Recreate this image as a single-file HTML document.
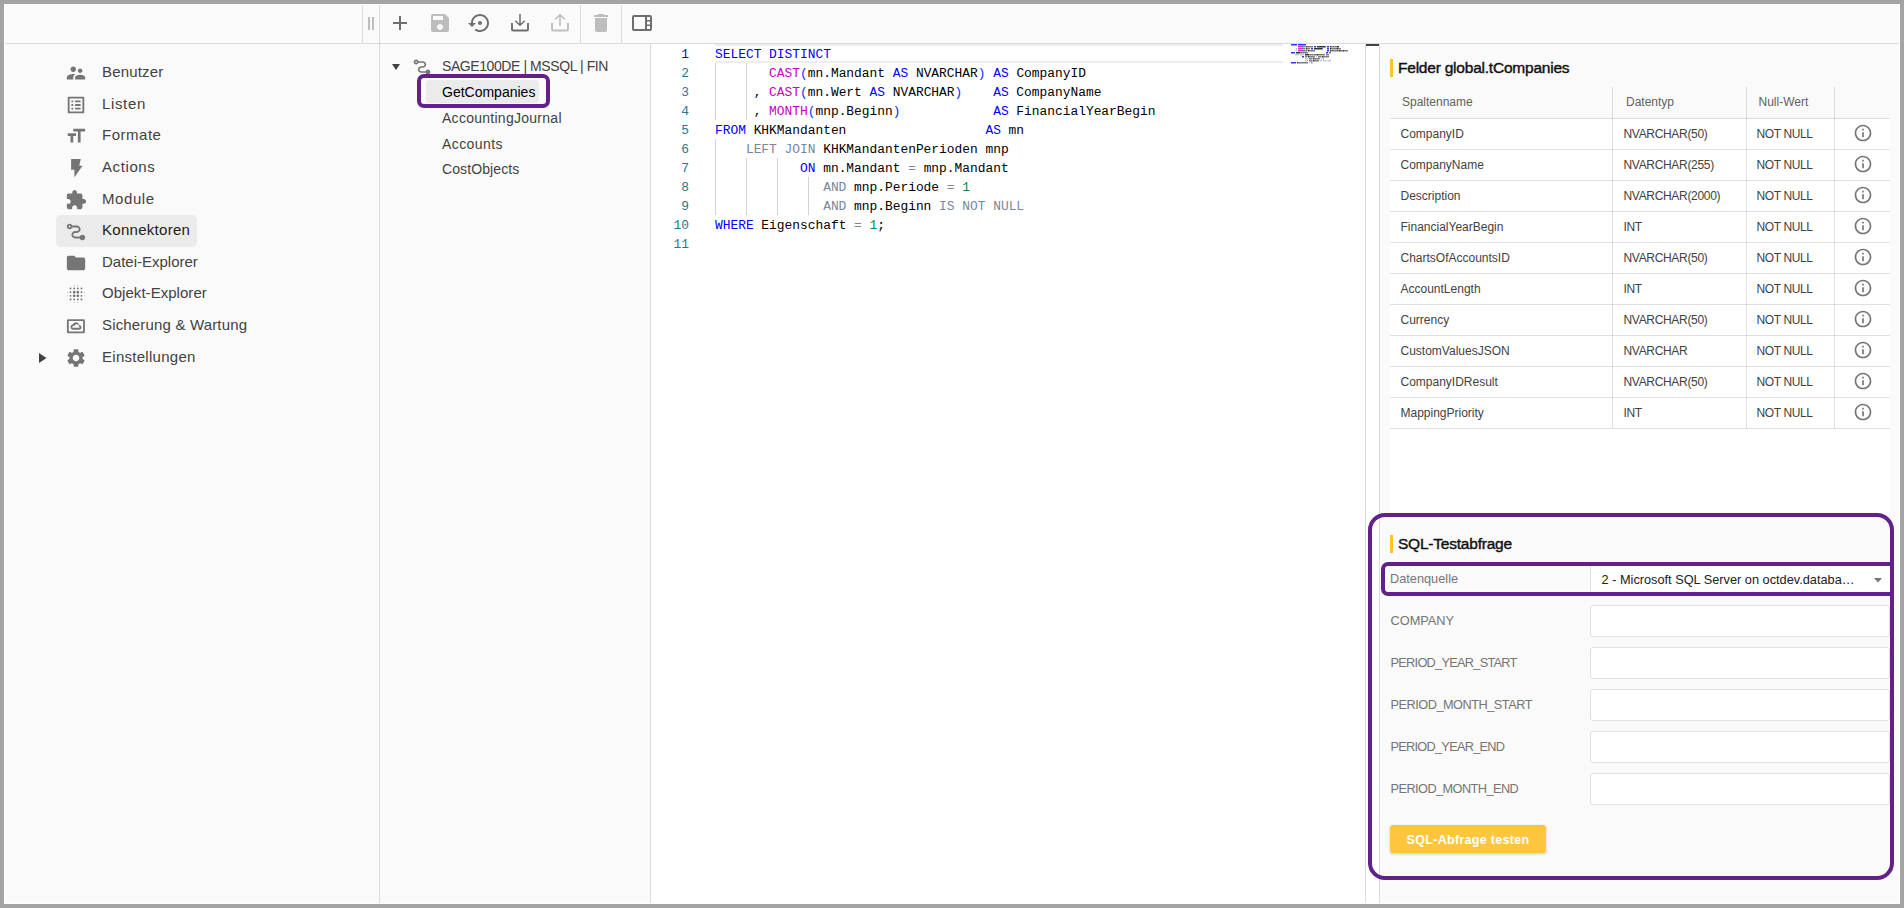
<!DOCTYPE html>
<html><head><meta charset="utf-8">
<style>
*{margin:0;padding:0;box-sizing:border-box}
html,body{width:1904px;height:908px;overflow:hidden;background:#a4a4a4;font-family:"Liberation Sans",sans-serif}
.abs{position:absolute}
#frame{position:absolute;left:4px;top:4px;width:1896px;height:900px;background:#fafafa;border:1px solid #fff;overflow:hidden}
.hl{position:absolute;background:rgba(0,0,0,.12)}
.nav{position:absolute;left:102px;font-size:15px;color:#424242;white-space:nowrap;line-height:20px}
.ico{position:absolute;fill:#757575}
.tree{position:absolute;left:442px;font-size:14px;color:#424242;white-space:nowrap;line-height:16px}
.code{position:absolute;left:715px;font-family:"Liberation Mono",monospace;font-size:12.88px;line-height:19px;white-space:pre;color:#000}
.ln{position:absolute;left:651px;width:38px;text-align:right;font-family:"Liberation Mono",monospace;font-size:12.88px;line-height:19px;color:#237893}
.k{color:#0000ff}.f{color:#c700c7}.o{color:#778899}.n{color:#098658}.b{color:#0431fa}
.guide{position:absolute;width:1px;background:#d3d3d3}
.txt{position:absolute;white-space:nowrap}
</style></head><body>
<div id="frame"></div>
<!-- toolbar lines -->
<div class="hl" style="left:5px;top:43px;width:1894px;height:1px"></div>
<div class="hl" style="left:362px;top:5px;width:1px;height:38px"></div>
<div class="hl" style="left:379px;top:5px;width:1px;height:898px"></div>
<div class="hl" style="left:580px;top:5px;width:1px;height:38px"></div>
<div class="hl" style="left:621px;top:5px;width:1px;height:38px"></div>
<div class="hl" style="left:650px;top:44px;width:1px;height:859px"></div>
<!-- editor bg -->
<div class="abs" style="left:651px;top:44px;width:714px;height:859px;background:#fff"></div>
<div class="hl" style="left:1365px;top:44px;width:1px;height:859px"></div>
<div class="abs" style="left:1366px;top:44px;width:13px;height:859px;background:#fff"></div>
<div class="abs" style="left:1366px;top:44px;width:13px;height:2px;background:#424242"></div>
<div class="hl" style="left:1379px;top:44px;width:1px;height:859px"></div>

<!-- toolbar icons -->
<div class="abs" style="left:368px;top:17px;width:2px;height:13px;background:#bdbdbd"></div>
<div class="abs" style="left:372px;top:17px;width:2px;height:13px;background:#bdbdbd"></div>
<svg class="abs" style="left:388px;top:11px" width="24" height="24" viewBox="0 0 24 24" fill="#6e6e6e"><path d="M19 13h-6v6h-2v-6H5v-2h6V5h2v6h6v2z"/></svg>
<svg class="abs" style="left:428px;top:11px" width="24" height="24" viewBox="0 0 24 24" fill="#bdbdbd"><path d="M17 3H5c-1.11 0-2 .9-2 2v14c0 1.1.89 2 2 2h14c1.1 0 2-.9 2-2V7l-4-4zm-5 16c-1.66 0-3-1.34-3-3s1.34-3 3-3 3 1.34 3 3-1.34 3-3 3zm3-10H5V5h10v4z"/></svg>
<svg class="abs" style="left:468px;top:11px" width="24" height="24" viewBox="0 0 24 24" fill="#6e6e6e"><path d="M14 12c0-1.1-.9-2-2-2s-2 .9-2 2 .9 2 2 2 2-.9 2-2zm-2-9c-4.97 0-9 4.03-9 9H0l4 4 4-4H5c0-3.87 3.13-7 7-7s7 3.13 7 7-3.13 7-7 7c-1.51 0-2.91-.49-4.06-1.3l-1.42 1.44C8.04 20.3 9.94 21 12 21c4.97 0 9-4.03 9-9s-4.03-9-9-9z"/></svg>
<svg class="abs" style="left:508px;top:11px" width="24" height="24" viewBox="0 0 24 24" fill="none" stroke="#6e6e6e" stroke-width="1.9"><path d="M4 12v6.2a1.3 1.3 0 0 0 1.3 1.3h13.4a1.3 1.3 0 0 0 1.3-1.3V12"/><path d="M12 3v11.2M7.3 9.7l4.7 4.6 4.7-4.6" stroke-width="1.5"/></svg>
<svg class="abs" style="left:548px;top:11px" width="24" height="24" viewBox="0 0 24 24" fill="none" stroke="#bdbdbd" stroke-width="1.9"><path d="M4 12v6.2a1.3 1.3 0 0 0 1.3 1.3h13.4a1.3 1.3 0 0 0 1.3-1.3V12"/><path d="M12 15V3.6M7.3 8.3L12 3.7l4.7 4.6" stroke-width="1.5"/></svg>
<svg class="abs" style="left:589px;top:11px" width="24" height="24" viewBox="0 0 24 24" fill="#bdbdbd"><path d="M6 19c0 1.1.9 2 2 2h8c1.1 0 2-.9 2-2V7H6v12zM19 4h-3.5l-1-1h-5l-1 1H5v2h14V4z"/></svg>
<svg class="abs" style="left:630px;top:11px" width="24" height="24" viewBox="0 0 24 24" fill="#6e6e6e" fill-rule="evenodd"><path d="M4 4h16a2 2 0 0 1 2 2v12a2 2 0 0 1-2 2H4a2 2 0 0 1-2-2V6a2 2 0 0 1 2-2zM4 6v12h11V6zM17 6v3h3V6zM17 10.5v3h3v-3zM17 15v3h3v-3z"/></svg>
<!-- sidebar -->
<div class="abs" style="left:56px;top:215px;width:141px;height:32px;background:#ebebeb;border-radius:5px"></div>
<svg class="ico" style="left:65px;top:62.00px" width="22" height="22" viewBox="0 0 24 24"><path d="M16.5 12c1.38 0 2.49-1.12 2.49-2.5S17.88 7 16.5 7C15.12 7 14 8.12 14 9.5s1.12 2.5 2.5 2.5zM9 11c1.66 0 2.99-1.34 2.99-3S10.66 5 9 5C7.34 5 6 6.34 6 8s1.34 3 3 3zm7.5 3c-1.83 0-5.5.92-5.5 2.75V19h11v-2.25c0-1.83-3.67-2.75-5.5-2.75zM9 13c-2.33 0-7 1.17-7 3.5V19h7v-2.25c0-.85.33-2.34 2.37-3.47C10.5 13.1 9.66 13 9 13z"/></svg>
<div class="nav" style="top:62.10px;color:#424242;letter-spacing:0.17px">Benutzer</div>
<svg class="ico" style="left:65px;top:93.60px" width="22" height="22" viewBox="0 0 24 24"><path d="M19 5v14H5V5h14m1.1-2H3.9c-.5 0-.9.4-.9.9v16.2c0 .4.4.9.9.9h16.2c.4 0 .9-.5.9-.9V3.9c0-.5-.5-.9-.9-.9zM11 7h6v2h-6V7zm0 4h6v2h-6v-2zm0 4h6v2h-6zM7 7h2v2H7zm0 4h2v2H7zm0 4h2v2H7z"/></svg>
<div class="nav" style="top:93.70px;color:#424242;letter-spacing:0.64px">Listen</div>
<svg class="ico" style="left:65px;top:125.20px" width="22" height="22" viewBox="0 0 24 24"><path d="M9 4v3h5v12h3V7h5V4H9zm-6 8h3v7h3v-7h3V9H3v3z"/></svg>
<div class="nav" style="top:125.30px;color:#424242;letter-spacing:0.52px">Formate</div>
<svg class="ico" style="left:65px;top:156.80px" width="22" height="22" viewBox="0 0 24 24"><path d="M6.65 2.1H17.2L15.55 9.6H19.2L10.25 22V14H6.65z"/></svg>
<div class="nav" style="top:156.90px;color:#424242;letter-spacing:0.6px">Actions</div>
<svg class="ico" style="left:65px;top:189.40px" width="22" height="22" viewBox="0 0 24 24"><path d="M20.5 11H19V7c0-1.1-.9-2-2-2h-4V3.5C13 2.12 11.88 1 10.5 1S8 2.12 8 3.5V5H4c-1.1 0-1.99.9-1.99 2v3.8H3.5c1.49 0 2.7 1.21 2.7 2.7s-1.21 2.7-2.7 2.7H2V20c0 1.1.9 2 2 2h3.8v-1.5c0-1.49 1.21-2.7 2.7-2.7 1.49 0 2.7 1.21 2.7 2.7V22H17c1.1 0 2-.9 2-2v-4h1.5c1.38 0 2.5-1.12 2.5-2.5S21.88 11 20.5 11z"/></svg>
<div class="nav" style="top:188.50px;color:#424242;letter-spacing:0.58px">Module</div>
<svg class="ico" style="left:65px;top:221.00px" width="22" height="22" viewBox="0 0 24 24"><g transform="translate(0 24) scale(0.025)"><path d="M760-120q-39 0-70-22.5T647-200H440q-66 0-113-47t-47-113q0-66 47-113t113-47h80q33 0 56.5-23.5T600-600q0-33-23.5-56.5T520-680H313q-13 35-43.5 57.5T200-600q-50 0-85-35t-35-85q0-50 35-85t85-35q39 0 69.5 22.5T313-760h207q66 0 113 47t47 113q0 66-47 113t-113 47h-80q-33 0-56.5 23.5T360-360q0 33 23.5 56.5T440-280h207q13-35 43.5-57.5T760-360q50 0 85 35t35 85q0 50-35 85t-85 35ZM200-680q17 0 28.5-11.5T240-720q0-17-11.5-28.5T200-760q-17 0-28.5 11.5T160-720q0 17 11.5 28.5T200-680Z"/></g></svg>
<div class="nav" style="top:220.10px;color:#212121;letter-spacing:0.29px">Konnektoren</div>
<svg class="ico" style="left:65px;top:251.60px" width="22" height="22" viewBox="0 0 24 24"><path d="M10 4H4c-1.1 0-1.99.9-1.99 2L2 18c0 1.1.9 2 2 2h16c1.1 0 2-.9 2-2V8c0-1.1-.9-2-2-2h-8l-2-2z"/></svg>
<div class="nav" style="top:251.70px;color:#424242;letter-spacing:0px">Datei-Explorer</div>
<svg class="ico" style="left:65px;top:283.20px" width="22" height="22" viewBox="0 0 24 24"><path d="M6 13c-.55 0-1 .45-1 1s.45 1 1 1 1-.45 1-1-.45-1-1-1zm0 4c-.55 0-1 .45-1 1s.45 1 1 1 1-.45 1-1-.45-1-1-1zm0-8c-.55 0-1 .45-1 1s.45 1 1 1 1-.45 1-1-.45-1-1-1zm-3 .5c-.28 0-.5.22-.5.5s.22.5.5.5.5-.22.5-.5-.22-.5-.5-.5zM6 5c-.55 0-1 .45-1 1s.45 1 1 1 1-.45 1-1-.45-1-1-1zm15 5.5c.28 0 .5-.22.5-.5s-.22-.5-.5-.5-.5.22-.5.5.22.5.5.5zM14 7c.55 0 1-.45 1-1s-.45-1-1-1-1 .45-1 1 .45 1 1 1zm0-3.5c.28 0 .5-.22.5-.5s-.22-.5-.5-.5-.5.22-.5.5.22.5.5.5zm-11 10c-.28 0-.5.22-.5.5s.22.5.5.5.5-.22.5-.5-.22-.5-.5-.5zm7 7c-.28 0-.5.22-.5.5s.22.5.5.5.5-.22.5-.5-.22-.5-.5-.5zm0-17.5c.28 0 .5-.22.5-.5s-.22-.5-.5-.5-.5.22-.5.5.22.5.5.5zM10 7c.55 0 1-.45 1-1s-.45-1-1-1-1 .45-1 1 .45 1 1 1zm0 5.5c-.83 0-1.5.67-1.5 1.5s.67 1.5 1.5 1.5 1.5-.67 1.5-1.5-.67-1.5-1.5-1.5zm8 .5c-.55 0-1 .45-1 1s.45 1 1 1 1-.45 1-1-.45-1-1-1zm0 4c-.55 0-1 .45-1 1s.45 1 1 1 1-.45 1-1-.45-1-1-1zm0-8c-.55 0-1 .45-1 1s.45 1 1 1 1-.45 1-1-.45-1-1-1zm0-4c-.55 0-1 .45-1 1s.45 1 1 1 1-.45 1-1-.45-1-1-1zm3 8.5c-.28 0-.5.22-.5.5s.22.5.5.5.5-.22.5-.5-.22-.5-.5-.5zM14 17c-.55 0-1 .45-1 1s.45 1 1 1 1-.45 1-1-.45-1-1-1zm0 3.5c-.28 0-.5.22-.5.5s.22.5.5.5.5-.22.5-.5-.22-.5-.5-.5zm-4-12c-.83 0-1.5.67-1.5 1.5s.67 1.5 1.5 1.5 1.5-.67 1.5-1.5-.67-1.5-1.5-1.5zm0 8.5c-.55 0-1 .45-1 1s.45 1 1 1 1-.45 1-1-.45-1-1-1zm4-4.5c-.83 0-1.5.67-1.5 1.5s.67 1.5 1.5 1.5 1.5-.67 1.5-1.5-.67-1.5-1.5-1.5zm0-4c-.83 0-1.5.67-1.5 1.5s.67 1.5 1.5 1.5 1.5-.67 1.5-1.5-.67-1.5-1.5-1.5z"/></svg>
<div class="nav" style="top:283.30px;color:#424242;letter-spacing:0.04px">Objekt-Explorer</div>
<svg class="ico" style="left:65px;top:315.30px" width="22" height="22" viewBox="0 0 24 24"><path d="M9 16h6.5c1.38 0 2.5-1.12 2.5-2.5S16.88 11 15.5 11h-.05c-.24-1.69-1.69-3-3.45-3-1.4 0-2.6.83-3.16 2.02h-.16C7.17 10.18 6 11.45 6 13c0 1.66 1.34 3 3 3zm.21-3.97l.23-.03h.6l.4-.63c.14-.22.84-1.37 2.56-1.37 1.51 0 2.45 1.38 2.49 2.62L15.5 13c.28 0 .5.22.5.5s-.22.5-.5.5H9c-.55 0-1-.45-1-1 0-.46.37-.94.79-.97z"/><path fill-rule="evenodd" d="M3.6 4.6h16.6a1.5 1.5 0 0 1 1.5 1.5v12.4a1.5 1.5 0 0 1-1.5 1.5H3.6a1.5 1.5 0 0 1-1.5-1.5V6.1a1.5 1.5 0 0 1 1.5-1.5zM4.1 6.6v11.4h15.6V6.6z"/></svg>
<div class="nav" style="top:314.90px;color:#424242;letter-spacing:0.17px">Sicherung &amp; Wartung</div>
<svg class="ico" style="left:65px;top:347.40px" width="22" height="22" viewBox="0 0 24 24"><path d="M19.14 12.94c.04-.3.06-.61.06-.94 0-.32-.02-.64-.07-.94l2.03-1.58c.18-.14.23-.41.12-.61l-1.92-3.32c-.12-.22-.37-.29-.59-.22l-2.39.96c-.5-.38-1.03-.7-1.62-.94l-.36-2.54c-.04-.24-.24-.41-.48-.41h-3.84c-.24 0-.43.17-.47.41l-.36 2.54c-.59.24-1.13.57-1.62.94l-2.39-.96c-.22-.08-.47 0-.59.22L2.74 8.87c-.12.21-.08.47.12.61l2.03 1.58c-.05.3-.09.63-.09.94s.02.64.07.94l-2.03 1.58c-.18.14-.23.41-.12.61l1.92 3.32c.12.22.37.29.59.22l2.39-.96c.5.38 1.03.7 1.62.94l.36 2.54c.05.24.24.41.48.41h3.84c.24 0 .44-.17.47-.41l.36-2.54c.59-.24 1.13-.56 1.62-.94l2.39.96c.22.08.47 0 .59-.22l1.92-3.32c.12-.22.07-.47-.12-.61l-2.01-1.58zM12 15.6c-1.98 0-3.6-1.62-3.6-3.6s1.62-3.6 3.6-3.6 3.6 1.62 3.6 3.6-1.62 3.6-3.6 3.6z"/></svg>
<div class="nav" style="top:346.50px;color:#424242;letter-spacing:0.28px">Einstellungen</div>
<svg class="abs" style="left:39px;top:352.5px" width="8" height="10" viewBox="0 0 8 10" fill="#424242"><path d="M0 0L7.5 5L0 10z"/></svg>
<!-- tree -->
<div class="abs" style="left:426px;top:80px;width:113px;height:23px;background:#ebebeb;border-radius:4px"></div>
<svg class="abs" style="left:392px;top:64px" width="8" height="6" viewBox="0 0 8 6" fill="#424242"><path d="M0 0h8L4 6z"/></svg>
<svg class="ico" style="left:412px;top:57px" width="20" height="20" viewBox="0 0 24 24"><g transform="translate(0 24) scale(0.025)"><path d="M760-120q-39 0-70-22.5T647-200H440q-66 0-113-47t-47-113q0-66 47-113t113-47h80q33 0 56.5-23.5T600-600q0-33-23.5-56.5T520-680H313q-13 35-43.5 57.5T200-600q-50 0-85-35t-35-85q0-50 35-85t85-35q39 0 69.5 22.5T313-760h207q66 0 113 47t47 113q0 66-47 113t-113 47h-80q-33 0-56.5 23.5T360-360q0 33 23.5 56.5T440-280h207q13-35 43.5-57.5T760-360q50 0 85 35t35 85q0 50-35 85t-85 35ZM200-680q17 0 28.5-11.5T240-720q0-17-11.5-28.5T200-760q-17 0-28.5 11.5T160-720q0 17 11.5 28.5T200-680Z"/></g></svg>
<div class="tree" style="top:58.00px;color:#424242;letter-spacing:-0.42px">SAGE100DE | MSSQL | FIN</div>
<div class="tree" style="top:84.40px;color:#000">GetCompanies</div>
<div class="tree" style="top:109.90px;color:#424242;letter-spacing:0.27px">AccountingJournal</div>
<div class="tree" style="top:135.70px;color:#424242;letter-spacing:0.41px">Accounts</div>
<div class="tree" style="top:160.60px;color:#424242;letter-spacing:0.1px">CostObjects</div>
<!-- editor -->
<div class="abs" style="left:715px;top:44px;width:568px;height:19px;border-top:2px solid #eeeeee;border-bottom:2px solid #eeeeee"></div>
<div class="guide" style="left:715.00px;top:63px;height:57px"></div>
<div class="guide" style="left:745.91px;top:63px;height:57px"></div>
<div class="guide" style="left:715.00px;top:139px;height:76px"></div>
<div class="guide" style="left:745.91px;top:158px;height:57px"></div>
<div class="guide" style="left:776.82px;top:158px;height:57px"></div>
<div class="guide" style="left:807.74px;top:177px;height:38px"></div>
<div class="ln" style="top:45px;color:#0b216f">1</div>
<div class="ln" style="top:64px;color:#237893">2</div>
<div class="ln" style="top:83px;color:#237893">3</div>
<div class="ln" style="top:102px;color:#237893">4</div>
<div class="ln" style="top:121px;color:#237893">5</div>
<div class="ln" style="top:140px;color:#237893">6</div>
<div class="ln" style="top:159px;color:#237893">7</div>
<div class="ln" style="top:178px;color:#237893">8</div>
<div class="ln" style="top:197px;color:#237893">9</div>
<div class="ln" style="top:216px;color:#237893">10</div>
<div class="ln" style="top:235px;color:#237893">11</div>
<div class="code" style="top:45px"><span class="k">SELECT</span> <span class="k">DISTINCT</span>
       <span class="f">CAST</span><span class="b">(</span>mn.Mandant <span class="k">AS</span> NVARCHAR<span class="b">)</span> <span class="k">AS</span> CompanyID
     , <span class="f">CAST</span><span class="b">(</span>mn.Wert <span class="k">AS</span> NVARCHAR<span class="b">)</span>    <span class="k">AS</span> CompanyName
     , <span class="f">MONTH</span><span class="b">(</span>mnp.Beginn<span class="b">)</span>            <span class="k">AS</span> FinancialYearBegin
<span class="k">FROM</span> KHKMandanten                  <span class="k">AS</span> mn
    <span class="o">LEFT</span> <span class="o">JOIN</span> KHKMandantenPerioden mnp
           <span class="k">ON</span> mn.Mandant <span class="o">=</span> mnp.Mandant
              <span class="o">AND</span> mnp.Periode <span class="o">=</span> <span class="n">1</span>
              <span class="o">AND</span> mnp.Beginn <span class="o">IS</span> <span class="o">NOT</span> <span class="o">NULL</span>
<span class="k">WHERE</span> Eigenschaft <span class="o">=</span> <span class="n">1</span>;
</div>
<!-- minimap -->
<svg class="abs" style="left:1291px;top:44px" width="60" height="22"><rect x="0" y="0" width="1" height="1.5" fill="#0000ff" fill-opacity="0.8"/><rect x="1" y="0" width="1" height="1.5" fill="#0000ff" fill-opacity="0.8"/><rect x="2" y="0" width="1" height="1.5" fill="#0000ff" fill-opacity="0.8"/><rect x="3" y="0" width="1" height="1.5" fill="#0000ff" fill-opacity="0.8"/><rect x="4" y="0" width="1" height="1.5" fill="#0000ff" fill-opacity="0.8"/><rect x="5" y="0" width="1" height="1.5" fill="#0000ff" fill-opacity="0.8"/><rect x="7" y="0" width="1" height="1.5" fill="#0000ff" fill-opacity="0.8"/><rect x="8" y="0" width="1" height="1.5" fill="#0000ff" fill-opacity="0.8"/><rect x="9" y="0" width="1" height="1.5" fill="#0000ff" fill-opacity="0.8"/><rect x="10" y="0" width="1" height="1.5" fill="#0000ff" fill-opacity="0.8"/><rect x="11" y="0" width="1" height="1.5" fill="#0000ff" fill-opacity="0.8"/><rect x="12" y="0" width="1" height="1.5" fill="#0000ff" fill-opacity="0.8"/><rect x="13" y="0" width="1" height="1.5" fill="#0000ff" fill-opacity="0.8"/><rect x="14" y="0" width="1" height="1.5" fill="#0000ff" fill-opacity="0.8"/><rect x="7" y="2" width="1" height="1.5" fill="#c700c7" fill-opacity="0.8"/><rect x="8" y="2" width="1" height="1.5" fill="#c700c7" fill-opacity="0.8"/><rect x="9" y="2" width="1" height="1.5" fill="#c700c7" fill-opacity="0.8"/><rect x="10" y="2" width="1" height="1.5" fill="#c700c7" fill-opacity="0.8"/><rect x="11" y="2" width="1" height="1.5" fill="#0431fa" fill-opacity="0.7"/><rect x="12" y="2" width="1" height="1.5" fill="#000000" fill-opacity="0.5"/><rect x="13" y="2" width="1" height="1.5" fill="#000000" fill-opacity="0.5"/><rect x="14" y="2" width="1" height="1.5" fill="#000000" fill-opacity="0.25"/><rect x="15" y="2" width="1" height="1.5" fill="#000000" fill-opacity="0.8"/><rect x="16" y="2" width="1" height="1.5" fill="#000000" fill-opacity="0.5"/><rect x="17" y="2" width="1" height="1.5" fill="#000000" fill-opacity="0.5"/><rect x="18" y="2" width="1" height="1.5" fill="#000000" fill-opacity="0.5"/><rect x="19" y="2" width="1" height="1.5" fill="#000000" fill-opacity="0.5"/><rect x="20" y="2" width="1" height="1.5" fill="#000000" fill-opacity="0.5"/><rect x="21" y="2" width="1" height="1.5" fill="#000000" fill-opacity="0.5"/><rect x="23" y="2" width="1" height="1.5" fill="#0000ff" fill-opacity="0.8"/><rect x="24" y="2" width="1" height="1.5" fill="#0000ff" fill-opacity="0.8"/><rect x="26" y="2" width="1" height="1.5" fill="#000000" fill-opacity="0.8"/><rect x="27" y="2" width="1" height="1.5" fill="#000000" fill-opacity="0.8"/><rect x="28" y="2" width="1" height="1.5" fill="#000000" fill-opacity="0.8"/><rect x="29" y="2" width="1" height="1.5" fill="#000000" fill-opacity="0.8"/><rect x="30" y="2" width="1" height="1.5" fill="#000000" fill-opacity="0.8"/><rect x="31" y="2" width="1" height="1.5" fill="#000000" fill-opacity="0.8"/><rect x="32" y="2" width="1" height="1.5" fill="#000000" fill-opacity="0.8"/><rect x="33" y="2" width="1" height="1.5" fill="#000000" fill-opacity="0.8"/><rect x="34" y="2" width="1" height="1.5" fill="#0431fa" fill-opacity="0.7"/><rect x="36" y="2" width="1" height="1.5" fill="#0000ff" fill-opacity="0.8"/><rect x="37" y="2" width="1" height="1.5" fill="#0000ff" fill-opacity="0.8"/><rect x="39" y="2" width="1" height="1.5" fill="#000000" fill-opacity="0.8"/><rect x="40" y="2" width="1" height="1.5" fill="#000000" fill-opacity="0.5"/><rect x="41" y="2" width="1" height="1.5" fill="#000000" fill-opacity="0.5"/><rect x="42" y="2" width="1" height="1.5" fill="#000000" fill-opacity="0.5"/><rect x="43" y="2" width="1" height="1.5" fill="#000000" fill-opacity="0.5"/><rect x="44" y="2" width="1" height="1.5" fill="#000000" fill-opacity="0.5"/><rect x="45" y="2" width="1" height="1.5" fill="#000000" fill-opacity="0.5"/><rect x="46" y="2" width="1" height="1.5" fill="#000000" fill-opacity="0.8"/><rect x="47" y="2" width="1" height="1.5" fill="#000000" fill-opacity="0.8"/><rect x="5" y="4" width="1" height="1.5" fill="#000000" fill-opacity="0.25"/><rect x="7" y="4" width="1" height="1.5" fill="#c700c7" fill-opacity="0.8"/><rect x="8" y="4" width="1" height="1.5" fill="#c700c7" fill-opacity="0.8"/><rect x="9" y="4" width="1" height="1.5" fill="#c700c7" fill-opacity="0.8"/><rect x="10" y="4" width="1" height="1.5" fill="#c700c7" fill-opacity="0.8"/><rect x="11" y="4" width="1" height="1.5" fill="#0431fa" fill-opacity="0.7"/><rect x="12" y="4" width="1" height="1.5" fill="#000000" fill-opacity="0.5"/><rect x="13" y="4" width="1" height="1.5" fill="#000000" fill-opacity="0.5"/><rect x="14" y="4" width="1" height="1.5" fill="#000000" fill-opacity="0.25"/><rect x="15" y="4" width="1" height="1.5" fill="#000000" fill-opacity="0.8"/><rect x="16" y="4" width="1" height="1.5" fill="#000000" fill-opacity="0.5"/><rect x="17" y="4" width="1" height="1.5" fill="#000000" fill-opacity="0.5"/><rect x="18" y="4" width="1" height="1.5" fill="#000000" fill-opacity="0.5"/><rect x="20" y="4" width="1" height="1.5" fill="#0000ff" fill-opacity="0.8"/><rect x="21" y="4" width="1" height="1.5" fill="#0000ff" fill-opacity="0.8"/><rect x="23" y="4" width="1" height="1.5" fill="#000000" fill-opacity="0.8"/><rect x="24" y="4" width="1" height="1.5" fill="#000000" fill-opacity="0.8"/><rect x="25" y="4" width="1" height="1.5" fill="#000000" fill-opacity="0.8"/><rect x="26" y="4" width="1" height="1.5" fill="#000000" fill-opacity="0.8"/><rect x="27" y="4" width="1" height="1.5" fill="#000000" fill-opacity="0.8"/><rect x="28" y="4" width="1" height="1.5" fill="#000000" fill-opacity="0.8"/><rect x="29" y="4" width="1" height="1.5" fill="#000000" fill-opacity="0.8"/><rect x="30" y="4" width="1" height="1.5" fill="#000000" fill-opacity="0.8"/><rect x="31" y="4" width="1" height="1.5" fill="#0431fa" fill-opacity="0.7"/><rect x="36" y="4" width="1" height="1.5" fill="#0000ff" fill-opacity="0.8"/><rect x="37" y="4" width="1" height="1.5" fill="#0000ff" fill-opacity="0.8"/><rect x="39" y="4" width="1" height="1.5" fill="#000000" fill-opacity="0.8"/><rect x="40" y="4" width="1" height="1.5" fill="#000000" fill-opacity="0.5"/><rect x="41" y="4" width="1" height="1.5" fill="#000000" fill-opacity="0.5"/><rect x="42" y="4" width="1" height="1.5" fill="#000000" fill-opacity="0.5"/><rect x="43" y="4" width="1" height="1.5" fill="#000000" fill-opacity="0.5"/><rect x="44" y="4" width="1" height="1.5" fill="#000000" fill-opacity="0.5"/><rect x="45" y="4" width="1" height="1.5" fill="#000000" fill-opacity="0.5"/><rect x="46" y="4" width="1" height="1.5" fill="#000000" fill-opacity="0.8"/><rect x="47" y="4" width="1" height="1.5" fill="#000000" fill-opacity="0.5"/><rect x="48" y="4" width="1" height="1.5" fill="#000000" fill-opacity="0.5"/><rect x="49" y="4" width="1" height="1.5" fill="#000000" fill-opacity="0.5"/><rect x="5" y="6" width="1" height="1.5" fill="#000000" fill-opacity="0.25"/><rect x="7" y="6" width="1" height="1.5" fill="#c700c7" fill-opacity="0.8"/><rect x="8" y="6" width="1" height="1.5" fill="#c700c7" fill-opacity="0.8"/><rect x="9" y="6" width="1" height="1.5" fill="#c700c7" fill-opacity="0.8"/><rect x="10" y="6" width="1" height="1.5" fill="#c700c7" fill-opacity="0.8"/><rect x="11" y="6" width="1" height="1.5" fill="#c700c7" fill-opacity="0.8"/><rect x="12" y="6" width="1" height="1.5" fill="#0431fa" fill-opacity="0.7"/><rect x="13" y="6" width="1" height="1.5" fill="#000000" fill-opacity="0.5"/><rect x="14" y="6" width="1" height="1.5" fill="#000000" fill-opacity="0.5"/><rect x="15" y="6" width="1" height="1.5" fill="#000000" fill-opacity="0.5"/><rect x="16" y="6" width="1" height="1.5" fill="#000000" fill-opacity="0.25"/><rect x="17" y="6" width="1" height="1.5" fill="#000000" fill-opacity="0.8"/><rect x="18" y="6" width="1" height="1.5" fill="#000000" fill-opacity="0.5"/><rect x="19" y="6" width="1" height="1.5" fill="#000000" fill-opacity="0.5"/><rect x="20" y="6" width="1" height="1.5" fill="#000000" fill-opacity="0.5"/><rect x="21" y="6" width="1" height="1.5" fill="#000000" fill-opacity="0.5"/><rect x="22" y="6" width="1" height="1.5" fill="#000000" fill-opacity="0.5"/><rect x="23" y="6" width="1" height="1.5" fill="#0431fa" fill-opacity="0.7"/><rect x="36" y="6" width="1" height="1.5" fill="#0000ff" fill-opacity="0.8"/><rect x="37" y="6" width="1" height="1.5" fill="#0000ff" fill-opacity="0.8"/><rect x="39" y="6" width="1" height="1.5" fill="#000000" fill-opacity="0.8"/><rect x="40" y="6" width="1" height="1.5" fill="#000000" fill-opacity="0.5"/><rect x="41" y="6" width="1" height="1.5" fill="#000000" fill-opacity="0.5"/><rect x="42" y="6" width="1" height="1.5" fill="#000000" fill-opacity="0.5"/><rect x="43" y="6" width="1" height="1.5" fill="#000000" fill-opacity="0.5"/><rect x="44" y="6" width="1" height="1.5" fill="#000000" fill-opacity="0.5"/><rect x="45" y="6" width="1" height="1.5" fill="#000000" fill-opacity="0.5"/><rect x="46" y="6" width="1" height="1.5" fill="#000000" fill-opacity="0.5"/><rect x="47" y="6" width="1" height="1.5" fill="#000000" fill-opacity="0.5"/><rect x="48" y="6" width="1" height="1.5" fill="#000000" fill-opacity="0.8"/><rect x="49" y="6" width="1" height="1.5" fill="#000000" fill-opacity="0.5"/><rect x="50" y="6" width="1" height="1.5" fill="#000000" fill-opacity="0.5"/><rect x="51" y="6" width="1" height="1.5" fill="#000000" fill-opacity="0.5"/><rect x="52" y="6" width="1" height="1.5" fill="#000000" fill-opacity="0.8"/><rect x="53" y="6" width="1" height="1.5" fill="#000000" fill-opacity="0.5"/><rect x="54" y="6" width="1" height="1.5" fill="#000000" fill-opacity="0.5"/><rect x="55" y="6" width="1" height="1.5" fill="#000000" fill-opacity="0.5"/><rect x="56" y="6" width="1" height="1.5" fill="#000000" fill-opacity="0.5"/><rect x="0" y="8" width="1" height="1.5" fill="#0000ff" fill-opacity="0.8"/><rect x="1" y="8" width="1" height="1.5" fill="#0000ff" fill-opacity="0.8"/><rect x="2" y="8" width="1" height="1.5" fill="#0000ff" fill-opacity="0.8"/><rect x="3" y="8" width="1" height="1.5" fill="#0000ff" fill-opacity="0.8"/><rect x="5" y="8" width="1" height="1.5" fill="#000000" fill-opacity="0.8"/><rect x="6" y="8" width="1" height="1.5" fill="#000000" fill-opacity="0.8"/><rect x="7" y="8" width="1" height="1.5" fill="#000000" fill-opacity="0.8"/><rect x="8" y="8" width="1" height="1.5" fill="#000000" fill-opacity="0.8"/><rect x="9" y="8" width="1" height="1.5" fill="#000000" fill-opacity="0.5"/><rect x="10" y="8" width="1" height="1.5" fill="#000000" fill-opacity="0.5"/><rect x="11" y="8" width="1" height="1.5" fill="#000000" fill-opacity="0.5"/><rect x="12" y="8" width="1" height="1.5" fill="#000000" fill-opacity="0.5"/><rect x="13" y="8" width="1" height="1.5" fill="#000000" fill-opacity="0.5"/><rect x="14" y="8" width="1" height="1.5" fill="#000000" fill-opacity="0.5"/><rect x="15" y="8" width="1" height="1.5" fill="#000000" fill-opacity="0.5"/><rect x="16" y="8" width="1" height="1.5" fill="#000000" fill-opacity="0.5"/><rect x="35" y="8" width="1" height="1.5" fill="#0000ff" fill-opacity="0.8"/><rect x="36" y="8" width="1" height="1.5" fill="#0000ff" fill-opacity="0.8"/><rect x="38" y="8" width="1" height="1.5" fill="#000000" fill-opacity="0.5"/><rect x="39" y="8" width="1" height="1.5" fill="#000000" fill-opacity="0.5"/><rect x="4" y="10" width="1" height="1.5" fill="#778899" fill-opacity="0.45"/><rect x="5" y="10" width="1" height="1.5" fill="#778899" fill-opacity="0.45"/><rect x="6" y="10" width="1" height="1.5" fill="#778899" fill-opacity="0.45"/><rect x="7" y="10" width="1" height="1.5" fill="#778899" fill-opacity="0.45"/><rect x="9" y="10" width="1" height="1.5" fill="#778899" fill-opacity="0.45"/><rect x="10" y="10" width="1" height="1.5" fill="#778899" fill-opacity="0.45"/><rect x="11" y="10" width="1" height="1.5" fill="#778899" fill-opacity="0.45"/><rect x="12" y="10" width="1" height="1.5" fill="#778899" fill-opacity="0.45"/><rect x="14" y="10" width="1" height="1.5" fill="#000000" fill-opacity="0.8"/><rect x="15" y="10" width="1" height="1.5" fill="#000000" fill-opacity="0.8"/><rect x="16" y="10" width="1" height="1.5" fill="#000000" fill-opacity="0.8"/><rect x="17" y="10" width="1" height="1.5" fill="#000000" fill-opacity="0.8"/><rect x="18" y="10" width="1" height="1.5" fill="#000000" fill-opacity="0.5"/><rect x="19" y="10" width="1" height="1.5" fill="#000000" fill-opacity="0.5"/><rect x="20" y="10" width="1" height="1.5" fill="#000000" fill-opacity="0.5"/><rect x="21" y="10" width="1" height="1.5" fill="#000000" fill-opacity="0.5"/><rect x="22" y="10" width="1" height="1.5" fill="#000000" fill-opacity="0.5"/><rect x="23" y="10" width="1" height="1.5" fill="#000000" fill-opacity="0.5"/><rect x="24" y="10" width="1" height="1.5" fill="#000000" fill-opacity="0.5"/><rect x="25" y="10" width="1" height="1.5" fill="#000000" fill-opacity="0.5"/><rect x="26" y="10" width="1" height="1.5" fill="#000000" fill-opacity="0.8"/><rect x="27" y="10" width="1" height="1.5" fill="#000000" fill-opacity="0.5"/><rect x="28" y="10" width="1" height="1.5" fill="#000000" fill-opacity="0.5"/><rect x="29" y="10" width="1" height="1.5" fill="#000000" fill-opacity="0.5"/><rect x="30" y="10" width="1" height="1.5" fill="#000000" fill-opacity="0.5"/><rect x="31" y="10" width="1" height="1.5" fill="#000000" fill-opacity="0.5"/><rect x="32" y="10" width="1" height="1.5" fill="#000000" fill-opacity="0.5"/><rect x="33" y="10" width="1" height="1.5" fill="#000000" fill-opacity="0.5"/><rect x="35" y="10" width="1" height="1.5" fill="#000000" fill-opacity="0.5"/><rect x="36" y="10" width="1" height="1.5" fill="#000000" fill-opacity="0.5"/><rect x="37" y="10" width="1" height="1.5" fill="#000000" fill-opacity="0.5"/><rect x="11" y="12" width="1" height="1.5" fill="#0000ff" fill-opacity="0.8"/><rect x="12" y="12" width="1" height="1.5" fill="#0000ff" fill-opacity="0.8"/><rect x="14" y="12" width="1" height="1.5" fill="#000000" fill-opacity="0.5"/><rect x="15" y="12" width="1" height="1.5" fill="#000000" fill-opacity="0.5"/><rect x="16" y="12" width="1" height="1.5" fill="#000000" fill-opacity="0.25"/><rect x="17" y="12" width="1" height="1.5" fill="#000000" fill-opacity="0.8"/><rect x="18" y="12" width="1" height="1.5" fill="#000000" fill-opacity="0.5"/><rect x="19" y="12" width="1" height="1.5" fill="#000000" fill-opacity="0.5"/><rect x="20" y="12" width="1" height="1.5" fill="#000000" fill-opacity="0.5"/><rect x="21" y="12" width="1" height="1.5" fill="#000000" fill-opacity="0.5"/><rect x="22" y="12" width="1" height="1.5" fill="#000000" fill-opacity="0.5"/><rect x="23" y="12" width="1" height="1.5" fill="#000000" fill-opacity="0.5"/><rect x="25" y="12" width="1" height="1.5" fill="#778899" fill-opacity="0.45"/><rect x="27" y="12" width="1" height="1.5" fill="#000000" fill-opacity="0.5"/><rect x="28" y="12" width="1" height="1.5" fill="#000000" fill-opacity="0.5"/><rect x="29" y="12" width="1" height="1.5" fill="#000000" fill-opacity="0.5"/><rect x="30" y="12" width="1" height="1.5" fill="#000000" fill-opacity="0.25"/><rect x="31" y="12" width="1" height="1.5" fill="#000000" fill-opacity="0.8"/><rect x="32" y="12" width="1" height="1.5" fill="#000000" fill-opacity="0.5"/><rect x="33" y="12" width="1" height="1.5" fill="#000000" fill-opacity="0.5"/><rect x="34" y="12" width="1" height="1.5" fill="#000000" fill-opacity="0.5"/><rect x="35" y="12" width="1" height="1.5" fill="#000000" fill-opacity="0.5"/><rect x="36" y="12" width="1" height="1.5" fill="#000000" fill-opacity="0.5"/><rect x="37" y="12" width="1" height="1.5" fill="#000000" fill-opacity="0.5"/><rect x="14" y="14" width="1" height="1.5" fill="#778899" fill-opacity="0.45"/><rect x="15" y="14" width="1" height="1.5" fill="#778899" fill-opacity="0.45"/><rect x="16" y="14" width="1" height="1.5" fill="#778899" fill-opacity="0.45"/><rect x="18" y="14" width="1" height="1.5" fill="#000000" fill-opacity="0.5"/><rect x="19" y="14" width="1" height="1.5" fill="#000000" fill-opacity="0.5"/><rect x="20" y="14" width="1" height="1.5" fill="#000000" fill-opacity="0.5"/><rect x="21" y="14" width="1" height="1.5" fill="#000000" fill-opacity="0.25"/><rect x="22" y="14" width="1" height="1.5" fill="#000000" fill-opacity="0.8"/><rect x="23" y="14" width="1" height="1.5" fill="#000000" fill-opacity="0.5"/><rect x="24" y="14" width="1" height="1.5" fill="#000000" fill-opacity="0.5"/><rect x="25" y="14" width="1" height="1.5" fill="#000000" fill-opacity="0.5"/><rect x="26" y="14" width="1" height="1.5" fill="#000000" fill-opacity="0.5"/><rect x="27" y="14" width="1" height="1.5" fill="#000000" fill-opacity="0.5"/><rect x="28" y="14" width="1" height="1.5" fill="#000000" fill-opacity="0.5"/><rect x="30" y="14" width="1" height="1.5" fill="#778899" fill-opacity="0.45"/><rect x="32" y="14" width="1" height="1.5" fill="#098658" fill-opacity="0.7"/><rect x="14" y="16" width="1" height="1.5" fill="#778899" fill-opacity="0.45"/><rect x="15" y="16" width="1" height="1.5" fill="#778899" fill-opacity="0.45"/><rect x="16" y="16" width="1" height="1.5" fill="#778899" fill-opacity="0.45"/><rect x="18" y="16" width="1" height="1.5" fill="#000000" fill-opacity="0.5"/><rect x="19" y="16" width="1" height="1.5" fill="#000000" fill-opacity="0.5"/><rect x="20" y="16" width="1" height="1.5" fill="#000000" fill-opacity="0.5"/><rect x="21" y="16" width="1" height="1.5" fill="#000000" fill-opacity="0.25"/><rect x="22" y="16" width="1" height="1.5" fill="#000000" fill-opacity="0.8"/><rect x="23" y="16" width="1" height="1.5" fill="#000000" fill-opacity="0.5"/><rect x="24" y="16" width="1" height="1.5" fill="#000000" fill-opacity="0.5"/><rect x="25" y="16" width="1" height="1.5" fill="#000000" fill-opacity="0.5"/><rect x="26" y="16" width="1" height="1.5" fill="#000000" fill-opacity="0.5"/><rect x="27" y="16" width="1" height="1.5" fill="#000000" fill-opacity="0.5"/><rect x="29" y="16" width="1" height="1.5" fill="#778899" fill-opacity="0.45"/><rect x="30" y="16" width="1" height="1.5" fill="#778899" fill-opacity="0.45"/><rect x="32" y="16" width="1" height="1.5" fill="#778899" fill-opacity="0.45"/><rect x="33" y="16" width="1" height="1.5" fill="#778899" fill-opacity="0.45"/><rect x="34" y="16" width="1" height="1.5" fill="#778899" fill-opacity="0.45"/><rect x="36" y="16" width="1" height="1.5" fill="#778899" fill-opacity="0.45"/><rect x="37" y="16" width="1" height="1.5" fill="#778899" fill-opacity="0.45"/><rect x="38" y="16" width="1" height="1.5" fill="#778899" fill-opacity="0.45"/><rect x="39" y="16" width="1" height="1.5" fill="#778899" fill-opacity="0.45"/><rect x="0" y="18" width="1" height="1.5" fill="#0000ff" fill-opacity="0.8"/><rect x="1" y="18" width="1" height="1.5" fill="#0000ff" fill-opacity="0.8"/><rect x="2" y="18" width="1" height="1.5" fill="#0000ff" fill-opacity="0.8"/><rect x="3" y="18" width="1" height="1.5" fill="#0000ff" fill-opacity="0.8"/><rect x="4" y="18" width="1" height="1.5" fill="#0000ff" fill-opacity="0.8"/><rect x="6" y="18" width="1" height="1.5" fill="#000000" fill-opacity="0.8"/><rect x="7" y="18" width="1" height="1.5" fill="#000000" fill-opacity="0.5"/><rect x="8" y="18" width="1" height="1.5" fill="#000000" fill-opacity="0.5"/><rect x="9" y="18" width="1" height="1.5" fill="#000000" fill-opacity="0.5"/><rect x="10" y="18" width="1" height="1.5" fill="#000000" fill-opacity="0.5"/><rect x="11" y="18" width="1" height="1.5" fill="#000000" fill-opacity="0.5"/><rect x="12" y="18" width="1" height="1.5" fill="#000000" fill-opacity="0.5"/><rect x="13" y="18" width="1" height="1.5" fill="#000000" fill-opacity="0.5"/><rect x="14" y="18" width="1" height="1.5" fill="#000000" fill-opacity="0.5"/><rect x="15" y="18" width="1" height="1.5" fill="#000000" fill-opacity="0.5"/><rect x="16" y="18" width="1" height="1.5" fill="#000000" fill-opacity="0.5"/><rect x="18" y="18" width="1" height="1.5" fill="#778899" fill-opacity="0.45"/><rect x="20" y="18" width="1" height="1.5" fill="#098658" fill-opacity="0.7"/><rect x="21" y="18" width="1" height="1.5" fill="#000000" fill-opacity="0.25"/></svg>
<!-- right panel -->
<div class="abs" style="left:1390px;top:59px;width:3px;height:18px;background:#fdc22e"></div>
<div class="txt" style="left:1398px;top:58.1px;font-size:15.5px;letter-spacing:-0.22px;font-weight:normal;-webkit-text-stroke:0.4px #111;color:#111;line-height:20px">Felder global.tCompanies</div>
<div class="abs" style="left:1390px;top:119px;width:500px;height:393px;background:#fff"></div>
<div class="hl" style="left:1390px;top:118px;width:500px;height:1px"></div>
<div class="hl" style="left:1612px;top:87px;width:1px;height:341px"></div>
<div class="hl" style="left:1746px;top:87px;width:1px;height:341px"></div>
<div class="hl" style="left:1834px;top:87px;width:1px;height:341px"></div>
<div class="hl" style="left:1390px;top:149px;width:500px;height:1px"></div>
<div class="hl" style="left:1390px;top:180px;width:500px;height:1px"></div>
<div class="hl" style="left:1390px;top:211px;width:500px;height:1px"></div>
<div class="hl" style="left:1390px;top:242px;width:500px;height:1px"></div>
<div class="hl" style="left:1390px;top:273px;width:500px;height:1px"></div>
<div class="hl" style="left:1390px;top:304px;width:500px;height:1px"></div>
<div class="hl" style="left:1390px;top:335px;width:500px;height:1px"></div>
<div class="hl" style="left:1390px;top:366px;width:500px;height:1px"></div>
<div class="hl" style="left:1390px;top:397px;width:500px;height:1px"></div>
<div class="hl" style="left:1390px;top:428px;width:500px;height:1px"></div>
<div class="txt" style="left:1402px;top:94.2px;font-size:12px;color:#616161;line-height:16px">Spaltenname</div>
<div class="txt" style="left:1626px;top:94.2px;font-size:12px;color:#616161;line-height:16px">Datentyp</div>
<div class="txt" style="left:1758.5px;top:94.2px;font-size:12px;color:#616161;line-height:16px">Null-Wert</div>
<div class="txt" style="left:1400.5px;top:125.6px;font-size:12px;color:#424242;line-height:16px">CompanyID</div>
<div class="txt" style="left:1623.5px;top:125.6px;font-size:12px;color:#424242;line-height:16px;letter-spacing:-0.32px">NVARCHAR(50)</div>
<div class="txt" style="left:1756.5px;top:125.6px;font-size:12px;color:#424242;line-height:16px;letter-spacing:-0.38px">NOT NULL</div>
<svg class="ico" style="left:1852.6px;top:122.8px" width="20" height="20" viewBox="0 0 24 24"><path d="M11 7h2v2h-2zm0 4h2v6h-2zm1-9C6.48 2 2 6.48 2 12s4.48 10 10 10 10-4.48 10-10S17.52 2 12 2zm0 18c-4.41 0-8-3.59-8-8s3.59-8 8-8 8 3.59 8 8-3.59 8-8 8z"/></svg>
<div class="txt" style="left:1400.5px;top:156.6px;font-size:12px;color:#424242;line-height:16px">CompanyName</div>
<div class="txt" style="left:1623.5px;top:156.6px;font-size:12px;color:#424242;line-height:16px;letter-spacing:-0.32px">NVARCHAR(255)</div>
<div class="txt" style="left:1756.5px;top:156.6px;font-size:12px;color:#424242;line-height:16px;letter-spacing:-0.38px">NOT NULL</div>
<svg class="ico" style="left:1852.6px;top:153.8px" width="20" height="20" viewBox="0 0 24 24"><path d="M11 7h2v2h-2zm0 4h2v6h-2zm1-9C6.48 2 2 6.48 2 12s4.48 10 10 10 10-4.48 10-10S17.52 2 12 2zm0 18c-4.41 0-8-3.59-8-8s3.59-8 8-8 8 3.59 8 8-3.59 8-8 8z"/></svg>
<div class="txt" style="left:1400.5px;top:187.6px;font-size:12px;color:#424242;line-height:16px">Description</div>
<div class="txt" style="left:1623.5px;top:187.6px;font-size:12px;color:#424242;line-height:16px;letter-spacing:-0.32px">NVARCHAR(2000)</div>
<div class="txt" style="left:1756.5px;top:187.6px;font-size:12px;color:#424242;line-height:16px;letter-spacing:-0.38px">NOT NULL</div>
<svg class="ico" style="left:1852.6px;top:184.8px" width="20" height="20" viewBox="0 0 24 24"><path d="M11 7h2v2h-2zm0 4h2v6h-2zm1-9C6.48 2 2 6.48 2 12s4.48 10 10 10 10-4.48 10-10S17.52 2 12 2zm0 18c-4.41 0-8-3.59-8-8s3.59-8 8-8 8 3.59 8 8-3.59 8-8 8z"/></svg>
<div class="txt" style="left:1400.5px;top:218.6px;font-size:12px;color:#424242;line-height:16px">FinancialYearBegin</div>
<div class="txt" style="left:1623.5px;top:218.6px;font-size:12px;color:#424242;line-height:16px;letter-spacing:-0.32px">INT</div>
<div class="txt" style="left:1756.5px;top:218.6px;font-size:12px;color:#424242;line-height:16px;letter-spacing:-0.38px">NOT NULL</div>
<svg class="ico" style="left:1852.6px;top:215.8px" width="20" height="20" viewBox="0 0 24 24"><path d="M11 7h2v2h-2zm0 4h2v6h-2zm1-9C6.48 2 2 6.48 2 12s4.48 10 10 10 10-4.48 10-10S17.52 2 12 2zm0 18c-4.41 0-8-3.59-8-8s3.59-8 8-8 8 3.59 8 8-3.59 8-8 8z"/></svg>
<div class="txt" style="left:1400.5px;top:249.6px;font-size:12px;color:#424242;line-height:16px">ChartsOfAccountsID</div>
<div class="txt" style="left:1623.5px;top:249.6px;font-size:12px;color:#424242;line-height:16px;letter-spacing:-0.32px">NVARCHAR(50)</div>
<div class="txt" style="left:1756.5px;top:249.6px;font-size:12px;color:#424242;line-height:16px;letter-spacing:-0.38px">NOT NULL</div>
<svg class="ico" style="left:1852.6px;top:246.8px" width="20" height="20" viewBox="0 0 24 24"><path d="M11 7h2v2h-2zm0 4h2v6h-2zm1-9C6.48 2 2 6.48 2 12s4.48 10 10 10 10-4.48 10-10S17.52 2 12 2zm0 18c-4.41 0-8-3.59-8-8s3.59-8 8-8 8 3.59 8 8-3.59 8-8 8z"/></svg>
<div class="txt" style="left:1400.5px;top:280.6px;font-size:12px;color:#424242;line-height:16px">AccountLength</div>
<div class="txt" style="left:1623.5px;top:280.6px;font-size:12px;color:#424242;line-height:16px;letter-spacing:-0.32px">INT</div>
<div class="txt" style="left:1756.5px;top:280.6px;font-size:12px;color:#424242;line-height:16px;letter-spacing:-0.38px">NOT NULL</div>
<svg class="ico" style="left:1852.6px;top:277.8px" width="20" height="20" viewBox="0 0 24 24"><path d="M11 7h2v2h-2zm0 4h2v6h-2zm1-9C6.48 2 2 6.48 2 12s4.48 10 10 10 10-4.48 10-10S17.52 2 12 2zm0 18c-4.41 0-8-3.59-8-8s3.59-8 8-8 8 3.59 8 8-3.59 8-8 8z"/></svg>
<div class="txt" style="left:1400.5px;top:311.6px;font-size:12px;color:#424242;line-height:16px">Currency</div>
<div class="txt" style="left:1623.5px;top:311.6px;font-size:12px;color:#424242;line-height:16px;letter-spacing:-0.32px">NVARCHAR(50)</div>
<div class="txt" style="left:1756.5px;top:311.6px;font-size:12px;color:#424242;line-height:16px;letter-spacing:-0.38px">NOT NULL</div>
<svg class="ico" style="left:1852.6px;top:308.8px" width="20" height="20" viewBox="0 0 24 24"><path d="M11 7h2v2h-2zm0 4h2v6h-2zm1-9C6.48 2 2 6.48 2 12s4.48 10 10 10 10-4.48 10-10S17.52 2 12 2zm0 18c-4.41 0-8-3.59-8-8s3.59-8 8-8 8 3.59 8 8-3.59 8-8 8z"/></svg>
<div class="txt" style="left:1400.5px;top:342.6px;font-size:12px;color:#424242;line-height:16px">CustomValuesJSON</div>
<div class="txt" style="left:1623.5px;top:342.6px;font-size:12px;color:#424242;line-height:16px;letter-spacing:-0.32px">NVARCHAR</div>
<div class="txt" style="left:1756.5px;top:342.6px;font-size:12px;color:#424242;line-height:16px;letter-spacing:-0.38px">NOT NULL</div>
<svg class="ico" style="left:1852.6px;top:339.8px" width="20" height="20" viewBox="0 0 24 24"><path d="M11 7h2v2h-2zm0 4h2v6h-2zm1-9C6.48 2 2 6.48 2 12s4.48 10 10 10 10-4.48 10-10S17.52 2 12 2zm0 18c-4.41 0-8-3.59-8-8s3.59-8 8-8 8 3.59 8 8-3.59 8-8 8z"/></svg>
<div class="txt" style="left:1400.5px;top:373.6px;font-size:12px;color:#424242;line-height:16px">CompanyIDResult</div>
<div class="txt" style="left:1623.5px;top:373.6px;font-size:12px;color:#424242;line-height:16px;letter-spacing:-0.32px">NVARCHAR(50)</div>
<div class="txt" style="left:1756.5px;top:373.6px;font-size:12px;color:#424242;line-height:16px;letter-spacing:-0.38px">NOT NULL</div>
<svg class="ico" style="left:1852.6px;top:370.8px" width="20" height="20" viewBox="0 0 24 24"><path d="M11 7h2v2h-2zm0 4h2v6h-2zm1-9C6.48 2 2 6.48 2 12s4.48 10 10 10 10-4.48 10-10S17.52 2 12 2zm0 18c-4.41 0-8-3.59-8-8s3.59-8 8-8 8 3.59 8 8-3.59 8-8 8z"/></svg>
<div class="txt" style="left:1400.5px;top:404.6px;font-size:12px;color:#424242;line-height:16px">MappingPriority</div>
<div class="txt" style="left:1623.5px;top:404.6px;font-size:12px;color:#424242;line-height:16px;letter-spacing:-0.32px">INT</div>
<div class="txt" style="left:1756.5px;top:404.6px;font-size:12px;color:#424242;line-height:16px;letter-spacing:-0.38px">NOT NULL</div>
<svg class="ico" style="left:1852.6px;top:401.8px" width="20" height="20" viewBox="0 0 24 24"><path d="M11 7h2v2h-2zm0 4h2v6h-2zm1-9C6.48 2 2 6.48 2 12s4.48 10 10 10 10-4.48 10-10S17.52 2 12 2zm0 18c-4.41 0-8-3.59-8-8s3.59-8 8-8 8 3.59 8 8-3.59 8-8 8z"/></svg>
<div class="abs" style="left:1390px;top:535px;width:3px;height:18px;background:#fdc22e"></div>
<div class="txt" style="left:1398px;top:534.1px;font-size:15.5px;letter-spacing:-0.22px;font-weight:normal;-webkit-text-stroke:0.4px #111;color:#111;line-height:20px">SQL-Testabfrage</div>
<div class="txt" style="left:1390px;top:571px;font-size:12.75px;color:#757575;line-height:16px">Datenquelle</div>
<div class="abs" style="left:1590px;top:564px;width:300px;height:30px;background:#fff;border-left:1px solid #e0e0e0"></div>
<div class="txt" style="left:1601.5px;top:572px;font-size:12.75px;color:#212121;line-height:16px">2 - Microsoft SQL Server on octdev.databa…</div>
<svg class="abs" style="left:1874px;top:577.5px" width="8" height="5" viewBox="0 0 8 5" fill="#757575"><path d="M0 0h8L4 4.5z"/></svg>
<div class="txt" style="left:1390.5px;top:612.5px;font-size:12.75px;color:#757575;line-height:16px">COMPANY</div>
<div class="abs" style="left:1590px;top:605px;width:300px;height:32px;background:#fff;border:1px solid #e0e0e0;border-radius:3px"></div>
<div class="txt" style="left:1390.5px;top:654.5px;font-size:12.75px;color:#757575;line-height:16px;letter-spacing:-0.72px">PERIOD_YEAR_START</div>
<div class="abs" style="left:1590px;top:647px;width:300px;height:32px;background:#fff;border:1px solid #e0e0e0;border-radius:3px"></div>
<div class="txt" style="left:1390.5px;top:696.5px;font-size:12.75px;color:#757575;line-height:16px;letter-spacing:-0.5px">PERIOD_MONTH_START</div>
<div class="abs" style="left:1590px;top:689px;width:300px;height:32px;background:#fff;border:1px solid #e0e0e0;border-radius:3px"></div>
<div class="txt" style="left:1390.5px;top:738.5px;font-size:12.75px;color:#757575;line-height:16px;letter-spacing:-0.73px">PERIOD_YEAR_END</div>
<div class="abs" style="left:1590px;top:731px;width:300px;height:32px;background:#fff;border:1px solid #e0e0e0;border-radius:3px"></div>
<div class="txt" style="left:1390.5px;top:780.5px;font-size:12.75px;color:#757575;line-height:16px;letter-spacing:-0.56px">PERIOD_MONTH_END</div>
<div class="abs" style="left:1590px;top:773px;width:300px;height:32px;background:#fff;border:1px solid #e0e0e0;border-radius:3px"></div>
<div class="abs" style="left:1390px;top:825px;width:156px;height:28px;background:#ffc53d;border-radius:3px;box-shadow:0 1px 3px rgba(0,0,0,.2)"></div>
<div class="txt" style="left:1390px;top:832px;width:156px;text-align:center;font-size:12.5px;font-weight:bold;color:#fff;line-height:16px;letter-spacing:0.3px">SQL-Abfrage testen</div>
<div class="abs" style="left:417px;top:74px;width:133px;height:34px;border:4px solid #622189;border-radius:7px"></div>
<div class="abs" style="left:1368px;top:513px;width:526px;height:367px;border:4px solid #622189;border-radius:17px"></div>
<div class="abs" style="left:1381px;top:562px;width:513px;height:34px;border:4px solid #622189;border-right:0;border-radius:7px 0 0 7px"></div>
</body></html>
